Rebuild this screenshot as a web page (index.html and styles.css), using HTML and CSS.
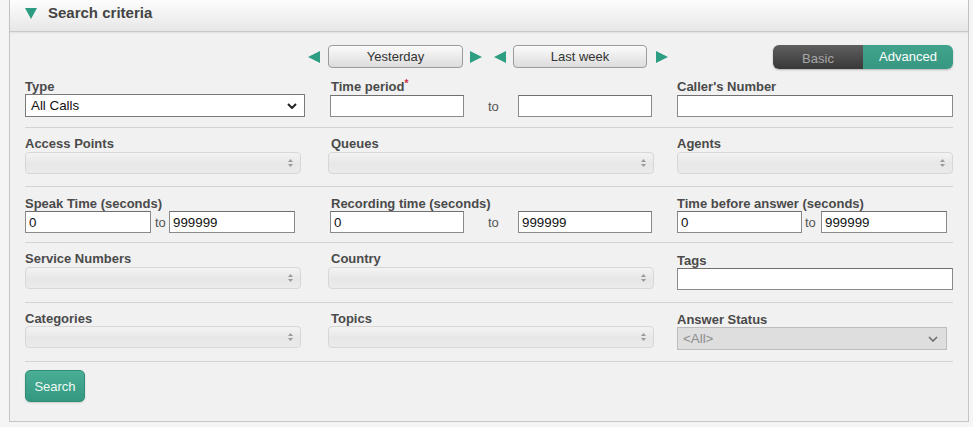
FILE: index.html
```html
<!DOCTYPE html>
<html lang="en">
<head>
<meta charset="utf-8">
<title>Search criteria</title>
<link rel="stylesheet" href="styles.css">
</head>
<body>
<div class="panel">
  <div class="panel-header">
    <svg class="caret" width="12" height="11" viewBox="0 0 12 11"><polygon points="0,0 12,0 6,11"/></svg>
    <h2 class="panel-title">Search criteria</h2>
  </div>
  <div class="panel-body">
    <div class="toolbar">
      <div class="quick-dates">
        <svg class="arrow" width="12" height="12" viewBox="0 0 12 12"><polygon points="12,0 12,12 0,6"/></svg>
        <button class="date-btn date-btn-first">Yesterday</button>
        <svg class="arrow arrow-after" width="12" height="12" viewBox="0 0 12 12"><polygon points="0,0 12,6 0,12"/></svg>
        <svg class="arrow arrow-next" width="12" height="12" viewBox="0 0 12 12"><polygon points="12,0 12,12 0,6"/></svg>
        <button class="date-btn date-btn-second">Last week</button>
        <svg class="arrow arrow-last" width="12" height="12" viewBox="0 0 12 12"><polygon points="0,0 12,6 0,12"/></svg>
      </div>
      <div class="mode-toggle">
        <button class="mode mode-basic">Basic</button>
        <button class="mode mode-advanced">Advanced</button>
      </div>
    </div>

    <div class="row row-type">
      <div class="field">
        <label class="label">Type</label>
        <div class="select select-type"><span>All Calls</span><svg width="10" height="6" viewBox="0 0 10 6"><polyline points="1,1 5,5 9,1"/></svg></div>
      </div>
      <div class="field">
        <label class="label">Time period<span class="req">*</span></label>
        <div class="range range-c2 offset-1">
          <input class="input w134" type="text" value="">
          <span class="to to-wide">to</span>
          <input class="input w134" type="text" value="">
        </div>
      </div>
      <div class="field">
        <label class="label">Caller's Number</label>
        <input class="input w276 offset-1" type="text" value="">
      </div>
    </div>

    <div class="row row-lists">
      <div class="field">
        <label class="label">Access Points</label>
        <div class="multi multi-c1"><svg width="5" height="8" viewBox="0 0 5 8"><polygon points="0,3 2.5,0 5,3"/><polygon points="0,5 2.5,8 5,5"/></svg></div>
      </div>
      <div class="field">
        <label class="label">Queues</label>
        <div class="multi multi-c2"><svg width="5" height="8" viewBox="0 0 5 8"><polygon points="0,3 2.5,0 5,3"/><polygon points="0,5 2.5,8 5,5"/></svg></div>
      </div>
      <div class="field">
        <label class="label">Agents</label>
        <div class="multi multi-c3"><svg width="5" height="8" viewBox="0 0 5 8"><polygon points="0,3 2.5,0 5,3"/><polygon points="0,5 2.5,8 5,5"/></svg></div>
      </div>
    </div>

    <div class="row row-ranges">
      <div class="field">
        <label class="label">Speak Time (seconds)</label>
        <div class="range">
          <input class="input w126" type="text" value="0">
          <span class="to to-narrow">to</span>
          <input class="input w126" type="text" value="999999">
        </div>
      </div>
      <div class="field">
        <label class="label">Recording time (seconds)</label>
        <div class="range range-c2">
          <input class="input w134" type="text" value="0">
          <span class="to to-wide">to</span>
          <input class="input w134" type="text" value="999999">
        </div>
      </div>
      <div class="field">
        <label class="label">Time before answer (seconds)</label>
        <div class="range">
          <input class="input w125" type="text" value="0">
          <span class="to to-mid">to</span>
          <input class="input w126" type="text" value="999999">
        </div>
      </div>
    </div>

    <div class="row row-service">
      <div class="field">
        <label class="label">Service Numbers</label>
        <div class="multi multi-c1"><svg width="5" height="8" viewBox="0 0 5 8"><polygon points="0,3 2.5,0 5,3"/><polygon points="0,5 2.5,8 5,5"/></svg></div>
      </div>
      <div class="field">
        <label class="label">Country</label>
        <div class="multi multi-c2"><svg width="5" height="8" viewBox="0 0 5 8"><polygon points="0,3 2.5,0 5,3"/><polygon points="0,5 2.5,8 5,5"/></svg></div>
      </div>
      <div class="field field-drop2">
        <label class="label">Tags</label>
        <input class="input w276" type="text" value="">
      </div>
    </div>

    <div class="row row-categories">
      <div class="field">
        <label class="label">Categories</label>
        <div class="multi multi-c1 flush"><svg width="5" height="8" viewBox="0 0 5 8"><polygon points="0,3 2.5,0 5,3"/><polygon points="0,5 2.5,8 5,5"/></svg></div>
      </div>
      <div class="field">
        <label class="label">Topics</label>
        <div class="multi multi-c2 flush"><svg width="5" height="8" viewBox="0 0 5 8"><polygon points="0,3 2.5,0 5,3"/><polygon points="0,5 2.5,8 5,5"/></svg></div>
      </div>
      <div class="field field-drop1">
        <label class="label">Answer Status</label>
        <div class="select select-answer"><span>&lt;All&gt;</span><svg width="10" height="6" viewBox="0 0 10 6"><polyline points="1,1 5,5 9,1"/></svg></div>
      </div>
    </div>

    <button class="search-btn">Search</button>
  </div>
</div>
</body>
</html>
```

FILE: styles.css
```css
* { box-sizing: border-box; }

body {
  margin: 0;
  background: #f5f5f5;
  font-family: "Liberation Sans", Arial, sans-serif;
  color: #444;
}

.panel {
  margin-left: 9px;
  width: 960px;
  border: 1px solid #c6c6c6;
  border-top: 0;
  background: #f1f1f1;
}

.panel-header {
  height: 32px;
  display: flex;
  align-items: flex-start;
  padding: 4px 0 0 15px;
  background: linear-gradient(#fdfdfd, #e7e7e7);
  border-bottom: 1px solid #c9c9c9;
  box-shadow: 0 1px 2px rgba(0, 0, 0, 0.07);
}

.caret {
  margin-top: 4px;
  fill: #2b9c80;
  flex: none;
}

.panel-title {
  margin: 0 0 0 11px;
  font-size: 15px;
  line-height: 18px;
  font-weight: bold;
  color: #444;
}

.panel-body {
  padding: 13px 15px 19px;
}

/* toolbar */
.toolbar {
  display: flex;
  align-items: flex-start;
  height: 24px;
}

.quick-dates {
  display: flex;
  align-items: center;
  height: 23px;
  margin-left: 283px;
}

.arrow { fill: #2e9e83; flex: none; }
.arrow-after { margin-left: 7px; }
.arrow-next { margin-left: 12px; }
.arrow-last { margin-left: 9px; }

.date-btn {
  height: 23px;
  padding: 0;
  border: 1px solid #9b9b9b;
  border-radius: 4px;
  background: linear-gradient(#fbfbfb, #dcdcdc);
  font-family: "Liberation Sans", Arial, sans-serif;
  font-size: 13px;
  color: #333;
}
.date-btn-first { width: 135px; margin-left: 8px; }
.date-btn-second { width: 134px; margin-left: 7px; }

.mode-toggle {
  margin-left: auto;
  display: flex;
  height: 24px;
  border-radius: 6px;
  overflow: hidden;
  box-shadow: 0 1px 2px rgba(0, 0, 0, 0.25);
}

.mode {
  width: 90px;
  height: 24px;
  border: 0;
  padding: 0;
  font-family: "Liberation Sans", Arial, sans-serif;
  font-size: 13px;
}
.mode-basic {
  background: linear-gradient(#5f5f5f, #383838);
  color: #a7a7a7;
  padding-top: 2px;
}
.mode-advanced {
  background: linear-gradient(#41a38c, #379882);
  color: #fff;
  padding-bottom: 2px;
}

/* rows */
.row {
  display: grid;
  grid-template-columns: 306px 346px 276px;
  border-bottom: 1px solid #d3d3d3;
}
.row-type { padding: 10px 0 10px; }
.row-lists { padding: 8px 0 12px; }
.row-ranges { padding: 9px 0 9px; }
.row-service { padding: 8px 0 12px; }
.row-categories { padding: 8px 0 11px; }

.field-drop2 { padding-top: 2px; }
.field-drop1 { padding-top: 1px; }

.label {
  display: block;
  font-size: 13px;
  line-height: 15px;
  font-weight: bold;
  color: #4a4a4a;
  white-space: nowrap;
}

.req {
  color: #d3233f;
  font-size: 10px;
  vertical-align: top;
  line-height: 10px;
}

.offset-1 { margin-top: 1px; }

.input {
  display: block;
  height: 22px;
  padding: 0 3px;
  border: 1px solid #8a8a8a;
  border-top-color: #6f6f6f;
  background: #fff;
  font-family: "Liberation Sans", Arial, sans-serif;
  font-size: 13.33px;
  color: #111;
  outline: none;
}
.w125 { width: 125px; }
.w126 { width: 126px; }
.w134 { width: 134px; }
.w276 { width: 276px; }

.range {
  display: flex;
  align-items: center;
}
.range-c2 { margin-left: -1px; }
.to {
  font-size: 13px;
  color: #555;
  flex: none;
}
.to-narrow { width: 18px; padding-left: 4px; }
.to-mid { width: 19px; padding-left: 3px; }
.to-wide { width: 54px; padding-left: 24px; }

.select {
  display: flex;
  align-items: center;
  justify-content: space-between;
  font-size: 13.33px;
}
.select svg { fill: none; stroke-width: 2; }

.select-type {
  width: 280px;
  height: 23px;
  padding: 0 7px 0 5px;
  border: 1px solid #7a7a7a;
  background: #fff;
  color: #111;
}
.select-type svg { stroke: #222; }

.select-answer {
  width: 270px;
  height: 23px;
  padding: 0 8px 0 5px;
  border: 1px solid #bdbdbd;
  background: #dedede;
  color: #8d8d8d;
}
.select-answer svg { stroke: #6d6d6d; stroke-width: 1.6; }

.multi {
  display: flex;
  align-items: center;
  justify-content: flex-end;
  height: 22px;
  margin-top: 1px;
  padding-right: 7px;
  border: 1px solid #d7d7d7;
  border-radius: 4px;
  background: linear-gradient(#f3f3f3, #e7e7e7 55%, #ebebeb);
}
.multi.flush { margin-top: 0; }
.multi svg { fill: #9a9a9a; }
.multi-c1 { width: 276px; }
.multi-c2 { width: 326px; margin-left: -3px; }
.multi-c3 { width: 276px; }

.search-btn {
  display: block;
  margin-top: 8px;
  width: 60px;
  height: 32px;
  padding: 0;
  border: 1px solid #2e8e78;
  border-radius: 5px;
  background: linear-gradient(#4aae96, #33987f);
  color: #f1faf7;
  font-family: "Liberation Sans", Arial, sans-serif;
  font-size: 13px;
  box-shadow: 0 1px 2px rgba(0, 0, 0, 0.15);
}
```
